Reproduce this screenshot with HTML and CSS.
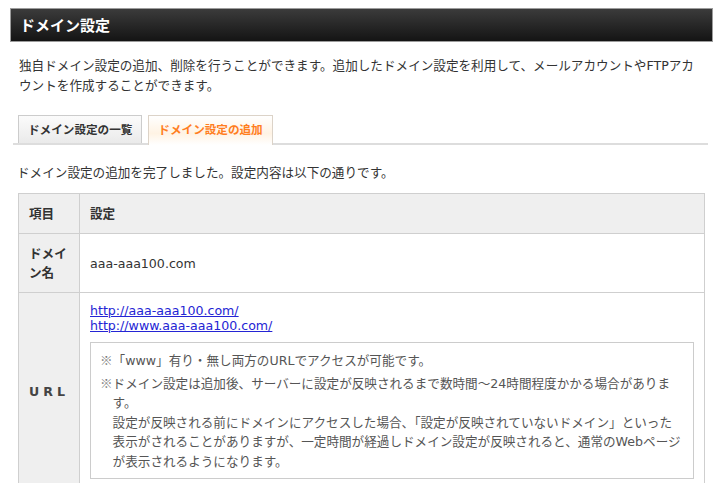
FILE: index.html
```html
<!DOCTYPE html>
<html lang="ja">
<head>
<meta charset="utf-8">
<title>ドメイン設定</title>
<link rel="stylesheet" href="styles.css">
</head>
<body>
<div class="page">
  <h1 class="titlebar">ドメイン設定</h1>
  <p class="desc">独自ドメイン設定の追加、削除を行うことができます。追加したドメイン設定を利用して、メールアカウントやFTPアカウントを作成することができます。</p>
  <ul class="tabs">
    <li class="tab">ドメイン設定の一覧</li>
    <li class="tab active">ドメイン設定の追加</li>
  </ul>
  <p class="msg">ドメイン設定の追加を完了しました。設定内容は以下の通りです。</p>
  <table class="result">
    <tr>
      <th class="key head">項目</th>
      <th class="val head">設定</th>
    </tr>
    <tr>
      <th class="key">ドメイン名</th>
      <td class="val domain">aaa-aaa100.com</td>
    </tr>
    <tr>
      <th class="key url">URL</th>
      <td class="val urls">
        <a class="link" href="#">http://aaa-aaa100.com/</a>
        <a class="link" href="#">http://www.aaa-aaa100.com/</a>
        <div class="notes">
          <ul class="note-list">
            <li><span class="mark">※</span>「www」有り・無し両方のURLでアクセスが可能です。</li>
            <li><span class="mark">※</span>ドメイン設定は追加後、サーバーに設定が反映されるまで数時間～24時間程度かかる場合があります。<br>設定が反映される前にドメインにアクセスした場合、「設定が反映されていないドメイン」といった表示がされることがありますが、一定時間が経過しドメイン設定が反映されると、通常のWebページが表示されるようになります。</li>
          </ul>
        </div>
      </td>
    </tr>
  </table>
</div>
</body>
</html>
```

FILE: styles.css
```css
html, body {
  margin: 0;
  padding: 0;
  background: #ffffff;
}

body {
  font-family: "DejaVu Sans", "Noto Sans CJK JP", sans-serif;
  font-size: 12.6px;
  color: #333333;
}

.page {
  padding: 8px 2px 0 10px;
}

.titlebar {
  margin: 0;
  height: 32px;
  line-height: 32px;
  padding-left: 9px;
  border: 1px solid #9c9c9c;
  background: linear-gradient(#3b3b3b, #141414);
  color: #ffffff;
  font-family: "Noto Sans CJK JP", sans-serif;
  font-weight: bold;
  font-size: 15px;
}

.desc {
  margin: 14px 9px 0 9px;
  line-height: 20px;
}

.tabs {
  list-style: none;
  margin: 19px 5px 0 3px;
  padding: 0 0 0 5px;
  display: flex;
  gap: 6px;
  border-bottom: 2px solid #dddddd;
  height: 28px;
}

.tab {
  box-sizing: border-box;
  height: 28px;
  padding: 0 9px;
  line-height: 27px;
  border: 1px solid #cccccc;
  border-bottom: none;
  background: linear-gradient(#fbfbfb, #eaeaea);
  font-family: "Noto Sans CJK JP", sans-serif;
  font-weight: bold;
  font-size: 11.6px;
  color: #333333;
}

.tab.active {
  height: 30px;
  background: linear-gradient(#ffffff 0%, #fff3e4 60%, #ffffff 100%);
  border-color: #dcd3c8;
  color: #ff7e1f;
}

.msg {
  margin: 18px 0 0 7px;
  line-height: 20px;
}

.result {
  margin: 10px 9px 0 8px;
  width: 687px;
  border-collapse: collapse;
}

.result th,
.result td {
  border: 1px solid #cfcfcf;
  text-align: left;
  padding: 10px;
  line-height: 19px;
}

.key {
  width: 40px;
  background: #efefef;
  font-weight: bold;
  color: #333333;
  vertical-align: middle;
}

.head {
  background: #efefef;
  padding-top: 10px;
  padding-bottom: 10px;
  height: 19px;
  font-weight: bold;
}

.val {
  vertical-align: middle;
}

.domain {
  color: #333333;
}

.url {
  letter-spacing: 4px;
  color: #444444;
}

.result td.urls {
  vertical-align: top;
  padding-top: 10px;
}

.link {
  display: block;
  width: max-content;
  color: #2424d4;
  text-decoration: underline;
  line-height: 15px;
}

.notes {
  margin-top: 9px;
  border: 1px solid #cccccc;
  padding: 7px 9px 7px 9px;
  color: #555555;
}

.note-list {
  list-style: none;
  margin: 0;
  padding: 0;
}

.note-list li {
  line-height: 19.5px;
  padding-left: 12.6px;
  text-indent: -12.6px;
}

.note-list li + li {
  margin-top: 2px;
}

.mark {
  font-family: "Noto Sans CJK JP", sans-serif;
  color: #777777;
}
```
